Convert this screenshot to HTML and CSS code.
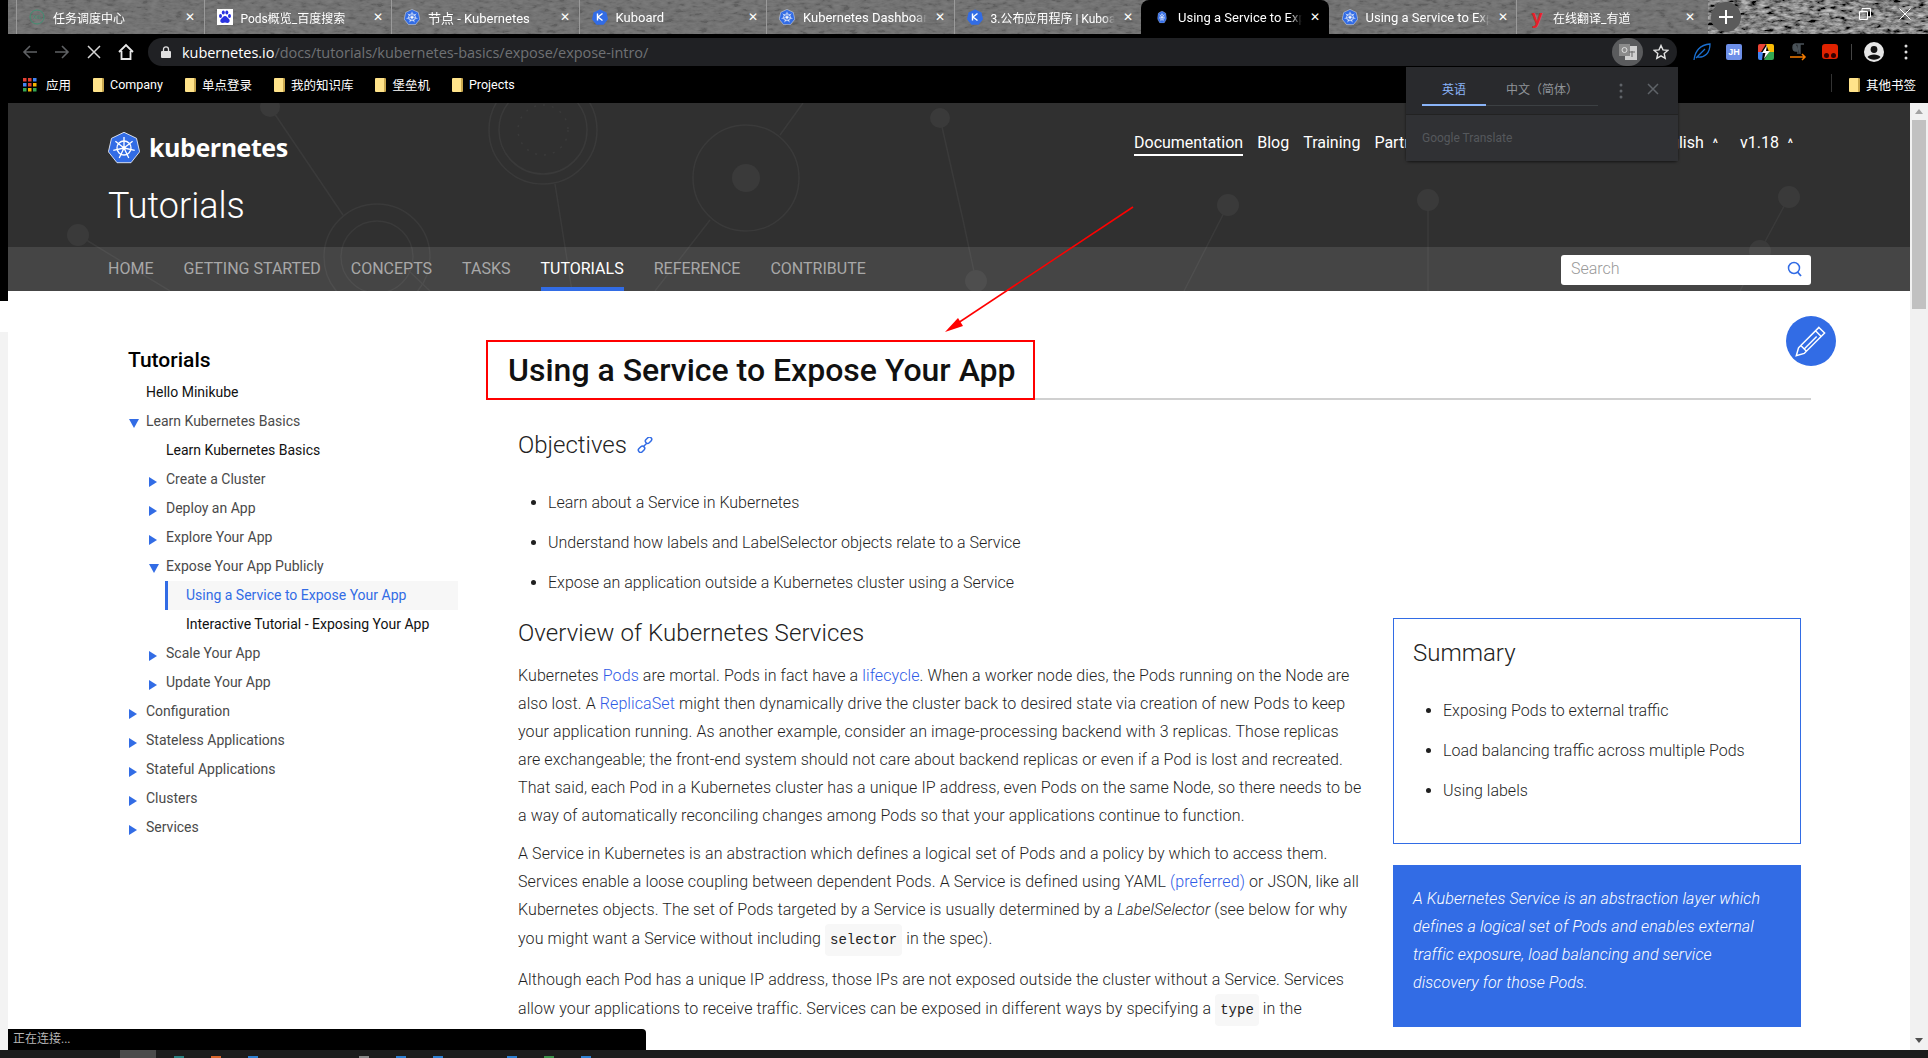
FILE: index.html
```html
<!DOCTYPE html>
<html lang="en">
<head>
    <meta charset="UTF-8">
    <title>Using a Service to Expose Your App</title>
    <link rel="stylesheet" href="styles.css">
</head>
<body>
<svg class="defs" width="0" height="0">
    <symbol id="k8s" viewBox="0 0 32 32">
        <path d="M16 .8 28.500 6.800 31.600 20.300 23 31.200H9L.4 20.300 3.500 6.800z" fill="#326ce5" stroke="#fff" stroke-width=".8" stroke-linejoin="round"/>
        <g fill="none" stroke="#fff" stroke-width="1.300">
            <circle cx="16" cy="16.500" r="7"/>
            <path d="M16 16.500V5.500M16 16.500 24.600 9.640M16 16.500 26.720 18.950M16 16.500 20.770 26.410M16 16.500 11.230 26.410M16 16.500 5.280 18.950M16 16.500 7.400 9.640"/>
        </g>
        <circle cx="16" cy="16.500" r="1.800" fill="#fff"/>
    </symbol>
    <filter id="grain" x="0" y="0" width="100%" height="100%">
        <feTurbulence type="fractalNoise" baseFrequency=".12 .3" numOctaves="3" seed="4"/>
        <feColorMatrix values=".65 .65 0 0 -.42  .65 .65 0 0 -.42  .65 .65 0 0 -.42  0 0 0 0 1"/>
    </filter>
</svg>

<div class="tabstrip">
    <svg class="strip-grain"><rect width="100%" height="100%" filter="url(#grain)"/></svg>
    <div class="strip-shade"></div>
    <div class="tab">
        <svg class="favicon" viewBox="0 0 16 16"><circle cx="8" cy="8" r="7" fill="none" stroke="#3f8f72" stroke-width="1"/><text x="8" y="10" class="xxl">XXL</text></svg>
        <span class="tab-title tab-title-cjk">任务调度中心</span><span class="tab-close">✕</span>
    </div>
    <div class="tab">
        <svg class="favicon" viewBox="0 0 16 16"><rect width="16" height="16" fill="#fff"/><g fill="#2932e1"><ellipse cx="3.500" cy="7" rx="1.500" ry="2"/><ellipse cx="6.300" cy="3.500" rx="1.500" ry="2"/><ellipse cx="9.800" cy="3.500" rx="1.500" ry="2"/><ellipse cx="12.500" cy="7" rx="1.500" ry="2"/><path d="M8 7c-2 0-2.500 2-4 3-1.200 1-.8 4 1.500 4 1 0 1.700-.4 2.500-.4s1.500.4 2.500.4c2.300 0 2.700-3 1.500-4C10.500 9 10 7 8 7z"/></g></svg>
        <span class="tab-title tab-title-cjk">Pods概览_百度搜索</span><span class="tab-close">✕</span>
    </div>
    <div class="tab">
        <svg class="favicon"><use href="#k8s"/></svg>
        <span class="tab-title">节点 - Kubernetes</span><span class="tab-close">✕</span>
    </div>
    <div class="tab">
        <svg class="favicon" viewBox="0 0 16 16"><path d="M8 .5 14.500 3.500 16 10.300 11.600 15.700H4.400L0 10.300 1.500 3.500z" fill="#326ce5"/><path d="M5.500 4.500v7M10.500 4.500 6 8l4.500 3.500" fill="none" stroke="#fff" stroke-width="1.400"/></svg>
        <span class="tab-title">Kuboard</span><span class="tab-close">✕</span>
    </div>
    <div class="tab">
        <svg class="favicon"><use href="#k8s"/></svg>
        <span class="tab-title">Kubernetes Dashboard</span><span class="tab-close">✕</span>
    </div>
    <div class="tab">
        <svg class="favicon" viewBox="0 0 16 16"><path d="M8 .5 14.500 3.500 16 10.300 11.600 15.700H4.400L0 10.300 1.500 3.500z" fill="#326ce5"/><path d="M5.500 4.500v7M10.500 4.500 6 8l4.500 3.500" fill="none" stroke="#fff" stroke-width="1.400"/></svg>
        <span class="tab-title tab-title-cjk">3.公布应用程序 | Kuboard</span><span class="tab-close">✕</span>
    </div>
    <div class="tab tab-active">
        <svg class="favicon favicon-loading"><use href="#k8s"/></svg>
        <span class="tab-title">Using a Service to Expose</span><span class="tab-close">✕</span>
    </div>
    <div class="tab tab-after-active">
        <svg class="favicon"><use href="#k8s"/></svg>
        <span class="tab-title">Using a Service to Expose</span><span class="tab-close">✕</span>
    </div>
    <div class="tab">
        <span class="favicon youdao">y</span>
        <span class="tab-title tab-title-cjk">在线翻译_有道</span><span class="tab-close">✕</span>
    </div>
    <div class="new-tab">
        <svg viewBox="0 0 14 14" width="14" height="14"><path d="M7 0v14M0 7h14" stroke="#fff" stroke-width="2"/></svg>
    </div>
    <div class="window-controls">
        <svg viewBox="0 0 12 12" width="12" height="12"><path d="M1 6h10" stroke="#fff"/></svg>
        <svg viewBox="0 0 12 12" width="12" height="12"><path d="M.5 3.500h8v8h-8zM3 3.500V.5h8.500V9H8.500" fill="none" stroke="#fff"/></svg>
        <svg viewBox="0 0 12 12" width="12" height="12"><path d="M.5.5l11 11M11.500.5l-11 11" stroke="#fff"/></svg>
    </div>
</div>

<div class="toolbar">
    <div class="nav-btn"><svg viewBox="0 0 16 16" width="16" height="16"><path d="M15 8H2M8 2 2 8l6 6" fill="none" stroke="#5f6164" stroke-width="1.600"/></svg></div>
    <div class="nav-btn"><svg viewBox="0 0 16 16" width="16" height="16"><path d="M1 8h13M8 2l6 6-6 6" fill="none" stroke="#5f6164" stroke-width="1.600"/></svg></div>
    <div class="nav-btn"><svg viewBox="0 0 14 14" width="14" height="14"><path d="M1 1l12 12M13 1 1 13" fill="none" stroke="#d6d6d6" stroke-width="1.500"/></svg></div>
    <div class="nav-btn"><svg viewBox="0 0 18 18" width="18" height="18"><path d="M2 9 9 2l7 7M4.500 8v8h9V8" fill="none" stroke="#e8e8e8" stroke-width="1.800"/></svg></div>
    <div class="omnibox">
        <svg class="lock" viewBox="0 0 10 12" width="10" height="12"><path d="M2.500 5V3.300a2.500 2.500 0 0 1 5 0V5" fill="none" stroke="#e0e0e0" stroke-width="1.300"/><rect y="5" width="10" height="7" rx="1" fill="#e0e0e0"/></svg>
        <span class="url"><b class="url-host">kubernetes.io</b>/docs/tutorials/kubernetes-basics/expose/expose-intro/</span>
        <div class="translate-btn">
            <svg viewBox="0 0 18 16" width="18" height="16"><rect x="6" y="2" width="12" height="14" fill="#d0d0d0"/><rect width="11" height="12" fill="#8b8b8b"/><circle cx="5.500" cy="6" r="2.500" fill="none" stroke="#ddd"/><path d="M10 8h6M13 7v6" stroke="#666"/></svg>
        </div>
        <svg class="star" viewBox="0 0 16 16" width="16" height="16"><path d="M8 1.500l2 4.400 4.800.5-3.600 3.200 1 4.700L8 11.900l-4.200 2.400 1-4.700L1.200 6.400 6 5.900z" fill="none" stroke="#e4e4e4" stroke-width="1.400"/></svg>
    </div>
    <div class="ext-icons">
        <div class="ext"><svg viewBox="0 0 18 18" width="18" height="18"><path d="M1 17C2 8 7 2 17 1c0 9-5 14-13 13M3 15 12 6" fill="none" stroke="#1a6fd0" stroke-width="1.300"/></svg></div>
        <div class="ext"><span class="ext-jh">JH</span></div>
        <div class="ext"><svg viewBox="0 0 16 16" width="16" height="16"><path d="M0 2a2 2 0 0 1 2-2h6L3 8H0z" fill="#ea4335"/><path d="M8 0h6a2 2 0 0 1 2 2v6h-5z" fill="#fbbc05"/><path d="M0 8h5l-1 8H2a2 2 0 0 1-2-2z" fill="#4285f4"/><path d="M11 8h5v6a2 2 0 0 1-2 2H6z" fill="#34a853"/><path d="M9 1 4 9h3.500L6 15l6-8H8z" fill="#fff"/></svg></div>
        <div class="ext"><svg viewBox="0 0 18 18" width="18" height="18"><path d="M6 1h9M7 1C3 1 3 8 7 8h2V1h2v10M9 8v3" fill="#4a5258" stroke="#4a5258" stroke-width="1.400"/><path d="M1 14h15M13 11l3 3-3 3" fill="none" stroke="#f57c00" stroke-width="1.500"/></svg></div>
        <div class="ext"><svg viewBox="0 0 16 16" width="16" height="16"><rect width="16" height="15" rx="3" fill="#e02200"/><circle cx="4.500" cy="11.500" r="2.500" fill="#300"/><circle cx="11.500" cy="11.500" r="2.500" fill="#300"/></svg></div>
    </div>
    <div class="toolbar-sep"></div>
    <div class="ext"><svg viewBox="0 0 20 20" width="20" height="20"><circle cx="10" cy="10" r="10" fill="#e6e6e6"/><circle cx="10" cy="7.500" r="3.400" fill="#111"/><path d="M3.500 15c2-3.500 11-3.500 13 0-3 3.500-10 3.500-13 0z" fill="#111"/></svg></div>
    <div class="ext"><svg viewBox="0 0 4 16" width="4" height="16"><circle cx="2" cy="2" r="1.500" fill="#ddd"/><circle cx="2" cy="8" r="1.500" fill="#ddd"/><circle cx="2" cy="14" r="1.500" fill="#ddd"/></svg></div>
</div>

<div class="bookmarks">
    <svg class="apps" viewBox="0 0 14 14" width="14" height="14">
        <g fill="#e24033"><rect width="3.500" height="3.500"/><rect x="5" width="3.500" height="3.500"/></g><rect x="10" width="3.500" height="3.500" fill="#4285f4"/>
        <rect y="5" width="3.500" height="3.500" fill="#4285f4"/><rect x="5" y="5" width="3.500" height="3.500" fill="#e24033"/><rect x="10" y="5" width="3.500" height="3.500" fill="#f5b400"/>
        <rect y="10" width="3.500" height="3.500" fill="#34a853"/><rect x="5" y="10" width="3.500" height="3.500" fill="#f5b400"/><rect x="10" y="10" width="3.500" height="3.500" fill="#34a853"/>
    </svg>
    <span class="bm bm-apps">应用</span>
    <span class="bm"><i class="folder"></i>Company</span>
    <span class="bm"><i class="folder"></i>单点登录</span>
    <span class="bm"><i class="folder"></i>我的知识库</span>
    <span class="bm"><i class="folder"></i>堡垒机</span>
    <span class="bm"><i class="folder"></i>Projects</span>
    <span class="bm bm-other"><i class="folder"></i>其他书签</span>
</div>

<div class="viewport">
    <div class="edge-strip"></div>
    <div class="page">
        <header class="hero">
            <svg class="hero-art" viewBox="8 103 1902 188" preserveAspectRatio="none">
                <g fill="none" stroke="#3a3a3a" stroke-width="1.500">
                    <circle cx="543" cy="130" r="54"/><circle cx="543" cy="130" r="44"/>
                    <circle cx="543" cy="130" r="25" stroke-dasharray="2 7"/>
                    <circle cx="377" cy="257" r="53"/><circle cx="377" cy="257" r="36"/>
                    <circle cx="746" cy="178" r="53"/>
                    <path d="M270 107 343 215M78 235 170 291M555 184 572 291M780 135 803 103M710 220 655 291M940 118 963 220 976 281M430 291 408 270M1228 205 1184 291M1428 200V291M1789 197 1760 251 1740 291"/>
                </g>
                <g fill="#3a3a3a">
                    <circle cx="270" cy="107" r="10"/><circle cx="78" cy="235" r="11"/><circle cx="746" cy="178" r="14"/>
                    <circle cx="940" cy="118" r="10"/><circle cx="976" cy="281" r="11"/><circle cx="1228" cy="205" r="11"/>
                    <circle cx="1428" cy="200" r="11"/><circle cx="1789" cy="197" r="11"/><circle cx="1760" cy="251" r="11"/>
                </g>
            </svg>
            <div class="hero-top">
                <div class="hero-brand">
                    <div class="logo">
                        <svg class="logo-mark"><use href="#k8s"/></svg>
                        <span class="logo-text">kubernetes</span>
                    </div>
                    <div class="hero-title">Tutorials</div>
                </div>
                <nav class="topnav">
                    <a class="topnav-on">Documentation</a>
                    <a>Blog</a>
                    <a>Training</a>
                    <a>Partners</a>
                    <a class="topnav-lang">English <i class="caret">^</i></a>
                    <a class="topnav-ver">v1.18 <i class="caret">^</i></a>
                </nav>
            </div>
            <div class="subnav">
                <a>HOME</a>
                <a>GETTING STARTED</a>
                <a>CONCEPTS</a>
                <a>TASKS</a>
                <a class="subnav-on">TUTORIALS</a>
                <a>REFERENCE</a>
                <a>CONTRIBUTE</a>
                <div class="search">
                    <span class="search-hint">Search</span>
                    <svg viewBox="0 0 16 16" width="16" height="16"><circle cx="7" cy="7" r="5.500" fill="none" stroke="#326ce5" stroke-width="1.500"/><path d="M10.500 11 14 15" stroke="#326ce5" stroke-width="1.800"/></svg>
                </div>
            </div>
        </header>

        <div class="columns">
            <aside class="sidebar">
                <h3 class="side-title">Tutorials</h3>
                <ul class="side-list">
                    <li class="lvl0 leaf">Hello Minikube</li>
                    <li class="lvl0 open">Learn Kubernetes Basics</li>
                    <li class="lvl1 leaf">Learn Kubernetes Basics</li>
                    <li class="lvl1 closed">Create a Cluster</li>
                    <li class="lvl1 closed">Deploy an App</li>
                    <li class="lvl1 closed">Explore Your App</li>
                    <li class="lvl1 open">Expose Your App Publicly</li>
                    <li class="lvl2 side-on">Using a Service to Expose Your App</li>
                    <li class="lvl2 leaf">Interactive Tutorial - Exposing Your App</li>
                    <li class="lvl1 closed">Scale Your App</li>
                    <li class="lvl1 closed">Update Your App</li>
                    <li class="lvl0 closed">Configuration</li>
                    <li class="lvl0 closed">Stateless Applications</li>
                    <li class="lvl0 closed">Stateful Applications</li>
                    <li class="lvl0 closed">Clusters</li>
                    <li class="lvl0 closed">Services</li>
                </ul>
            </aside>

            <main class="content">
                <div class="title-row">
                    <h1 class="page-title">Using a Service to Expose Your App</h1>
                </div>
                <section class="article">
                    <h2 class="heading">Objectives <svg class="anchor" viewBox="0 0 16 16" width="16" height="16"><g fill="none" stroke="#326ce5" stroke-width="1.500"><rect x="8" y="1" width="7" height="4.500" rx="2.200" transform="rotate(-45 11.500 3.200)"/><rect x="1" y="10" width="7" height="4.500" rx="2.200" transform="rotate(-45 4.500 12.200)"/><path d="M6 10l4-4"/></g></svg></h2>
                    <ul class="bullets">
                        <li>Learn about a Service in Kubernetes</li>
                        <li>Understand how labels and LabelSelector objects relate to a Service</li>
                        <li>Expose an application outside a Kubernetes cluster using a Service</li>
                    </ul>
                    <div class="split">
                        <div class="split-main">
                            <h2 class="heading heading-tight">Overview of Kubernetes Services</h2>
                            <p>Kubernetes <a>Pods</a> are mortal. Pods in fact have a <a>lifecycle</a>. When a worker node dies, the Pods running on the Node are also lost. A <a>ReplicaSet</a> might then dynamically drive the cluster back to desired state via creation of new Pods to keep your application running. As another example, consider an image-processing backend with 3 replicas. Those replicas are exchangeable; the front-end system should not care about backend replicas or even if a Pod is lost and recreated. That said, each Pod in a Kubernetes cluster has a unique IP address, even Pods on the same Node, so there needs to be a way of automatically reconciling changes among Pods so that your applications continue to function.</p>
                            <p>A Service in Kubernetes is an abstraction which defines a logical set of Pods and a policy by which to access them. Services enable a loose coupling between dependent Pods. A Service is defined using YAML <a>(preferred)</a> or JSON, like all Kubernetes objects. The set of Pods targeted by a Service is usually determined by a <em>LabelSelector</em> (see below for why you might want a Service without including <code>selector</code> in the spec).</p>
                            <p>Although each Pod has a unique IP address, those IPs are not exposed outside the cluster without a Service. Services allow your applications to receive traffic. Services can be exposed in different ways by specifying a <code>type</code> in the</p>
                        </div>
                        <div class="split-side">
                            <div class="summary">
                                <h2 class="heading">Summary</h2>
                                <ul class="bullets">
                                    <li>Exposing Pods to external traffic</li>
                                    <li>Load balancing traffic across multiple Pods</li>
                                    <li>Using labels</li>
                                </ul>
                            </div>
                            <div class="callout">A Kubernetes Service is an abstraction layer which defines a logical set of Pods and enables external traffic exposure, load balancing and service discovery for those Pods.</div>
                        </div>
                    </div>
                </section>
            </main>
        </div>

        <a class="edit-btn">
            <svg viewBox="0 0 30 30" width="34" height="34"><path d="M22 3l5 5L9 26l-7 2 2-7zM19 6l5 5M6 19l5 5M17 8 6 19M20 11 9 22" fill="none" stroke="#fff" stroke-width="1.300"/></svg>
        </a>
        <svg class="annotation" viewBox="8 103 1902 947">
            <path d="M1133 207 952 327" stroke="#f00" stroke-width="1.500"/>
            <path d="M945 332 958 318 963 326z" fill="#f00"/>
        </svg>
        <div class="status-bubble">正在连接...</div>
    </div>
    <div class="scrollbar">
        <i class="scroll-up"></i>
        <div class="scroll-thumb"></div>
        <i class="scroll-down"></i>
    </div>
</div>

<div class="taskbar">
    <div class="task-active"></div>
    <div class="task-bits">
        <i class="bit-teal"></i><i class="bit-orange"></i><i class="bit-blue"></i><i></i><i></i><i class="bit-grey"></i><i class="bit-blue"></i><i class="bit-blue"></i><i></i><i class="bit-blue"></i><i class="bit-green"></i><i class="bit-blue"></i>
    </div>
</div>

<div class="translate-pop">
    <div class="pop-head">
        <div class="pop-tabs">
            <span class="pop-tab pop-tab-on">英语</span>
            <span class="pop-tab">中文（简体）</span>
        </div>
        <svg viewBox="0 0 4 16" width="4" height="16"><circle cx="2" cy="2" r="1.500" fill="#5f6368"/><circle cx="2" cy="8" r="1.500" fill="#5f6368"/><circle cx="2" cy="14" r="1.500" fill="#5f6368"/></svg>
        <svg class="pop-close" viewBox="0 0 12 12" width="12" height="12"><path d="M1 1l10 10M11 1 1 11" stroke="#5f6368" stroke-width="1.500"/></svg>
    </div>
    <div class="pop-foot">Google Translate</div>
</div>
</body>
</html>
```

FILE: styles.css
```css
* {
    box-sizing: border-box;
}

html, body {
    margin: 0;
    height: 1058px;
    overflow: hidden;
}

body {
    position: relative;
    display: flex;
    flex-direction: column;
    background: #000;
    font-family: Roboto, "Noto Sans CJK SC", sans-serif;
    color: #1f1f1f;
}

.defs {
    position: absolute;
}

a {
    color: inherit;
    text-decoration: none;
}

/* browser chrome */
.tabstrip {
    position: relative;
    height: 34px;
    flex: none;
    display: flex;
    padding-left: 16px;
    background: #444;
    overflow: hidden;
}

.strip-grain {
    position: absolute;
    left: 0;
    top: 0;
    width: 100%;
    height: 100%;
}

.strip-shade {
    position: absolute;
    left: 8px;
    right: 220px;
    top: 0;
    bottom: 0;
    background: rgba(112, 112, 112, .85);
}

.strip-shade::before {
    content: "";
    position: absolute;
    left: -8px;
    top: 0;
    bottom: 0;
    width: 8px;
    background: #000;
}

.tab {
    position: relative;
    width: 187.500px;
    height: 34px;
    flex: none;
    display: flex;
    align-items: center;
    padding-left: 12px;
    border-left: 1px solid #9a9a9a;
    color: #fff;
    font-size: 13px;
}

.tab:first-of-type,
.tab-active,
.tab-after-active {
    border-left-color: transparent;
}

.tab-active {
    background: #000;
    border-radius: 8px 8px 0 0;
}

.favicon {
    width: 16px;
    height: 16px;
    flex: none;
    margin-right: 8px;
}

.favicon-loading {
    transform: scale(.6, .8);
}

.xxl {
    font-size: 5px;
    text-anchor: middle;
    fill: #3f8f72;
}

.youdao {
    color: #e5222a;
    font: bold 20px/16px "Liberation Sans", sans-serif;
    text-align: center;
}

.tab-title {
    width: 124px;
    white-space: nowrap;
    overflow: hidden;
    -webkit-mask-image: linear-gradient(90deg, #000 90%, transparent);
    mask-image: linear-gradient(90deg, #000 90%, transparent);
}

.tab-title-cjk {
    font-size: 12px;
}

.tab-close {
    margin-left: 8px;
    font-size: 12px;
    line-height: 1;
}

.new-tab {
    position: relative;
    width: 30px;
    height: 30px;
    flex: none;
    margin: 2px 0 0 7px;
    display: flex;
    align-items: center;
    justify-content: center;
    border-radius: 50%;
    background: #5b5b5b;
}

.window-controls {
    position: relative;
    margin-left: auto;
    width: 110px;
    height: 28px;
    padding-right: 17px;
    display: flex;
    align-items: center;
    justify-content: space-between;
}

.toolbar {
    height: 32px;
    flex: none;
    display: flex;
    align-items: flex-end;
    padding-left: 14px;
    background: #000;
}

.nav-btn {
    width: 32px;
    height: 28px;
    flex: none;
    display: flex;
    align-items: center;
    justify-content: center;
}

.omnibox {
    width: 1529px;
    height: 28px;
    flex: none;
    margin-left: 6px;
    display: flex;
    align-items: center;
    padding-left: 13px;
    border-radius: 14px;
    background: #202124;
}

.url {
    margin-left: 11px;
    font: 14.500px "Open Sans", sans-serif;
    letter-spacing: -.04px;
    color: #6f7174;
    white-space: nowrap;
}

.url-host {
    font-weight: 400;
    color: #fff;
}

.translate-btn {
    width: 31px;
    height: 28px;
    margin-left: auto;
    display: flex;
    align-items: center;
    justify-content: center;
    border-radius: 14px;
    background: #5a5b5d;
}

.star {
    margin: 0 8px 0 10px;
}

.ext-icons {
    margin-left: 9px;
    display: flex;
}

.ext {
    width: 32px;
    height: 28px;
    flex: none;
    display: flex;
    align-items: center;
    justify-content: center;
}

.ext-jh {
    width: 16px;
    height: 16px;
    border-radius: 2px;
    background: #6d8fe8;
    color: #fff;
    font: bold 9px/16px "Liberation Sans", sans-serif;
    text-align: center;
}

.toolbar-sep {
    width: 1px;
    height: 16px;
    margin: 0 6px 6px 5px;
    background: #444;
}

.bookmarks {
    height: 37px;
    flex: none;
    display: flex;
    align-items: center;
    padding-left: 23px;
    background: #000;
    color: #fff;
    font-size: 12.500px;
}

.apps {
    margin-right: 9px;
}

.bm {
    display: flex;
    align-items: center;
    margin-right: 22px;
    white-space: nowrap;
}

.bm-apps {
    margin-right: 22px;
}

.bm-other {
    position: relative;
    margin-left: auto;
    margin-right: 12px;
}

.bm-other::before {
    content: "";
    position: absolute;
    left: -18px;
    top: -1px;
    width: 1px;
    height: 18px;
    background: #333;
}

.folder {
    width: 11px;
    height: 14px;
    margin-right: 6px;
    border-radius: 1px;
    background: #ffe38a;
    border-right: 2px solid #c9a84f;
}

/* the page */
.viewport {
    position: relative;
    height: 947px;
    flex: none;
    display: flex;
    background: #fff;
}

.edge-strip {
    width: 8px;
    flex: none;
    background: linear-gradient(#000 198px, #fff 198px, #fff 229px, #f3f3f3 229px);
}

.page {
    position: relative;
    width: 1902px;
    flex: none;
    overflow: hidden;
}

.hero {
    position: relative;
    height: 188px;
    display: flex;
    flex-direction: column;
    background: #303030;
    color: #fff;
}

.hero-art {
    position: absolute;
    left: 0;
    top: 0;
    width: 100%;
    height: 100%;
}

.hero-top {
    position: relative;
    flex: 1;
    display: flex;
    justify-content: space-between;
    padding: 28px 117px 0 100px;
}

.logo {
    display: flex;
    align-items: center;
    height: 32px;
}

.logo-mark {
    width: 32px;
    height: 33px;
    margin-right: 9px;
}

.logo-text {
    font: 700 25px "Open Sans", sans-serif;
    letter-spacing: -.45px;
}

.hero-title {
    margin-top: 21px;
    font-size: 36px;
    font-weight: 300;
    line-height: 44px;
}

.topnav {
    width: 659px;
    height: 27px;
    display: flex;
    gap: 14px;
    font-size: 16px;
    font-weight: 400;
    line-height: 24px;
}

.topnav-on {
    height: 25px;
    border-bottom: 2px solid #fff;
}

.topnav-lang {
    margin-left: auto;
    margin-right: 8px;
}

.caret {
    font-style: normal;
    font-size: 12px;
    font-weight: 500;
    margin-left: 5px;
}

.subnav {
    position: relative;
    height: 44px;
    flex: none;
    display: flex;
    gap: 30px;
    padding: 0 99px 0 100px;
    background: rgba(255, 255, 255, .1);
    color: #a8a8a8;
    font-size: 16px;
    font-weight: 400;
    line-height: 44px;
}

.subnav-on {
    color: #fff;
    border-bottom: 4px solid #326ce5;
}

.search {
    width: 250px;
    height: 30px;
    margin: 8px 0 0 auto;
    display: flex;
    align-items: center;
    justify-content: space-between;
    padding: 0 8px 2px 10px;
    border-radius: 3px;
    background: #fff;
}

.search-hint {
    color: #999;
    font-size: 16px;
    font-weight: 300;
}

.columns {
    display: flex;
}

.sidebar {
    width: 478px;
    flex: none;
    padding: 56px 0 0 120px;
}

.side-title {
    margin: 0 0 5px;
    font-size: 21px;
    font-weight: 500;
    line-height: 26px;
    color: #000;
}

.side-list {
    width: 330px;
    margin: 0;
    padding: 0;
    list-style: none;
    font-size: 14px;
    line-height: 29px;
    color: #4a4a4a;
}

.lvl0 {
    padding-left: 18px;
}

.lvl1 {
    padding-left: 38px;
}

.lvl2 {
    padding-left: 58px;
}

.leaf {
    color: #111;
}

.open,
.closed {
    position: relative;
}

.open::before,
.closed::before {
    content: "";
    position: absolute;
    top: 12px;
}

.lvl0.open::before,
.lvl0.closed::before {
    left: 1px;
}

.lvl1.open::before,
.lvl1.closed::before {
    left: 21px;
}

.open::before {
    border-style: solid;
    border-width: 9px 5px 0;
    border-color: #326ce5 transparent transparent;
}

.closed::before {
    border-style: solid;
    border-width: 5px 0 5px 8px;
    border-color: transparent transparent transparent #326ce5;
}

.side-on {
    margin-left: 37px;
    width: 293px;
    padding-left: 18px;
    border-left: 3px solid #326ce5;
    background: #f7f7f7;
    color: #326ce5;
}

.content {
    width: 1325px;
    flex: none;
    font-weight: 300;
}

.title-row {
    height: 60px;
    margin-top: 49px;
    border-bottom: 2px solid #d0d0d0;
}

.page-title {
    width: 549px;
    height: 60px;
    margin: 0;
    padding-left: 20px;
    border: 2px solid #f00;
    font-size: 32px;
    font-weight: 500;
    line-height: 56px;
    color: #111;
}

.article {
    padding: 30px 10px 0 32px;
}

.heading {
    margin: 0;
    font-size: 24px;
    font-weight: 300;
    line-height: 30px;
    color: #222;
}

.heading-tight {
    margin-bottom: 14px;
}

.anchor {
    margin-left: 4px;
}

.bullets {
    margin: 29px 0 0;
    padding-left: 30px;
    list-style: disc;
    font-size: 16px;
    line-height: 28px;
}

.bullets li {
    margin-bottom: 12px;
}

.split {
    display: flex;
    gap: 30px;
    margin-top: 21px;
}

.split-main {
    width: 845px;
    flex: none;
    font-size: 16px;
    letter-spacing: .09px;
    line-height: 28px;
}

.split-main p {
    margin: 0 0 10px;
}

.split-main a {
    color: #2f5be6;
}

code {
    display: inline-block;
    height: 32px;
    padding: 0 5px;
    border-radius: 4px;
    background: #f7f7f7;
    font: 14px/32px "Liberation Mono", monospace;
    letter-spacing: 0;
    color: #222;
    vertical-align: middle;
}

.split-side {
    width: 408px;
    flex: none;
}

.summary {
    height: 226px;
    padding: 19px 19px;
    border: 1px solid #326ce5;
}

.callout {
    height: 162px;
    margin-top: 21px;
    padding: 20px 20px;
    background: #326ce5;
    color: #fff;
    font-size: 16px;
    font-style: italic;
    font-weight: 300;
    letter-spacing: .12px;
    line-height: 28px;
}

/* things lying over the page */
.edit-btn {
    position: absolute;
    left: 1778px;
    top: 213px;
    width: 50px;
    height: 50px;
    display: flex;
    align-items: center;
    justify-content: center;
    border-radius: 50%;
    background: #326ce5;
}

.annotation {
    position: absolute;
    left: 0;
    top: 0;
    width: 1902px;
    height: 947px;
    pointer-events: none;
}

.status-bubble {
    position: absolute;
    left: 0;
    bottom: 0;
    width: 638px;
    height: 21px;
    padding-left: 5px;
    border-radius: 0 4px 0 0;
    background: #000;
    color: #b8b8b8;
    font-size: 12px;
    line-height: 21px;
}

.scrollbar {
    position: relative;
    width: 18px;
    flex: none;
    background: #f1f1f1;
}

.scroll-thumb {
    position: absolute;
    left: 2px;
    right: 2px;
    top: 17px;
    height: 189px;
    background: #c1c1c1;
}

.scroll-up,
.scroll-down {
    position: absolute;
    left: 5px;
    border-style: solid;
}

.scroll-up {
    top: 6px;
    border-width: 0 4px 5px;
    border-color: transparent transparent #a3a3a3;
}

.scroll-down {
    bottom: 7px;
    border-width: 5px 4px 0;
    border-color: #505050 transparent transparent;
}

.taskbar {
    height: 8px;
    flex: none;
    display: flex;
    padding-left: 120px;
    background: #1c1c1c;
}

.task-active {
    width: 36px;
    background: #4b4b4b;
}

.task-bits {
    display: flex;
    align-items: flex-end;
    gap: 27px;
    margin-left: 18px;
}

.task-bits i {
    width: 10px;
    height: 2px;
}

.bit-teal { background: #2a7f7f; }
.bit-orange { background: #d8662c; }
.bit-blue { background: #2d7fd0; }
.bit-grey { background: #888; }
.bit-green { background: #3c8f4a; }

.translate-pop {
    position: absolute;
    left: 1406px;
    top: 67px;
    width: 272px;
    height: 94px;
    border-radius: 0 0 4px 4px;
    background: #292a2d;
    box-shadow: 0 1px 3px rgba(0, 0, 0, .6);
}

.pop-head {
    height: 48px;
    display: flex;
    align-items: flex-start;
    padding: 0 0 0 16px;
    border-bottom: 1px solid #222;
}

.pop-head svg {
    margin-top: 16px;
}

.pop-tabs {
    width: 176px;
    height: 39px;
    margin-right: 21px;
    display: flex;
    border-bottom: 1px solid #3c4043;
}

.pop-tab {
    padding: 0 16px;
    height: 39px;
    flex: none;
    font-size: 12px;
    line-height: 47px;
    color: #8f9398;
    white-space: nowrap;
}

.pop-tab-on {
    width: 64px;
    margin-right: 4px;
    text-align: center;
    color: #8ab4f8;
    border-bottom: 2px solid #8ab4f8;
}

.pop-close {
    margin-left: 24px;
}

.pop-foot {
    height: 46px;
    padding-left: 16px;
    background: #303134;
    color: #55585c;
    font-size: 12px;
    line-height: 46px;
}
```
